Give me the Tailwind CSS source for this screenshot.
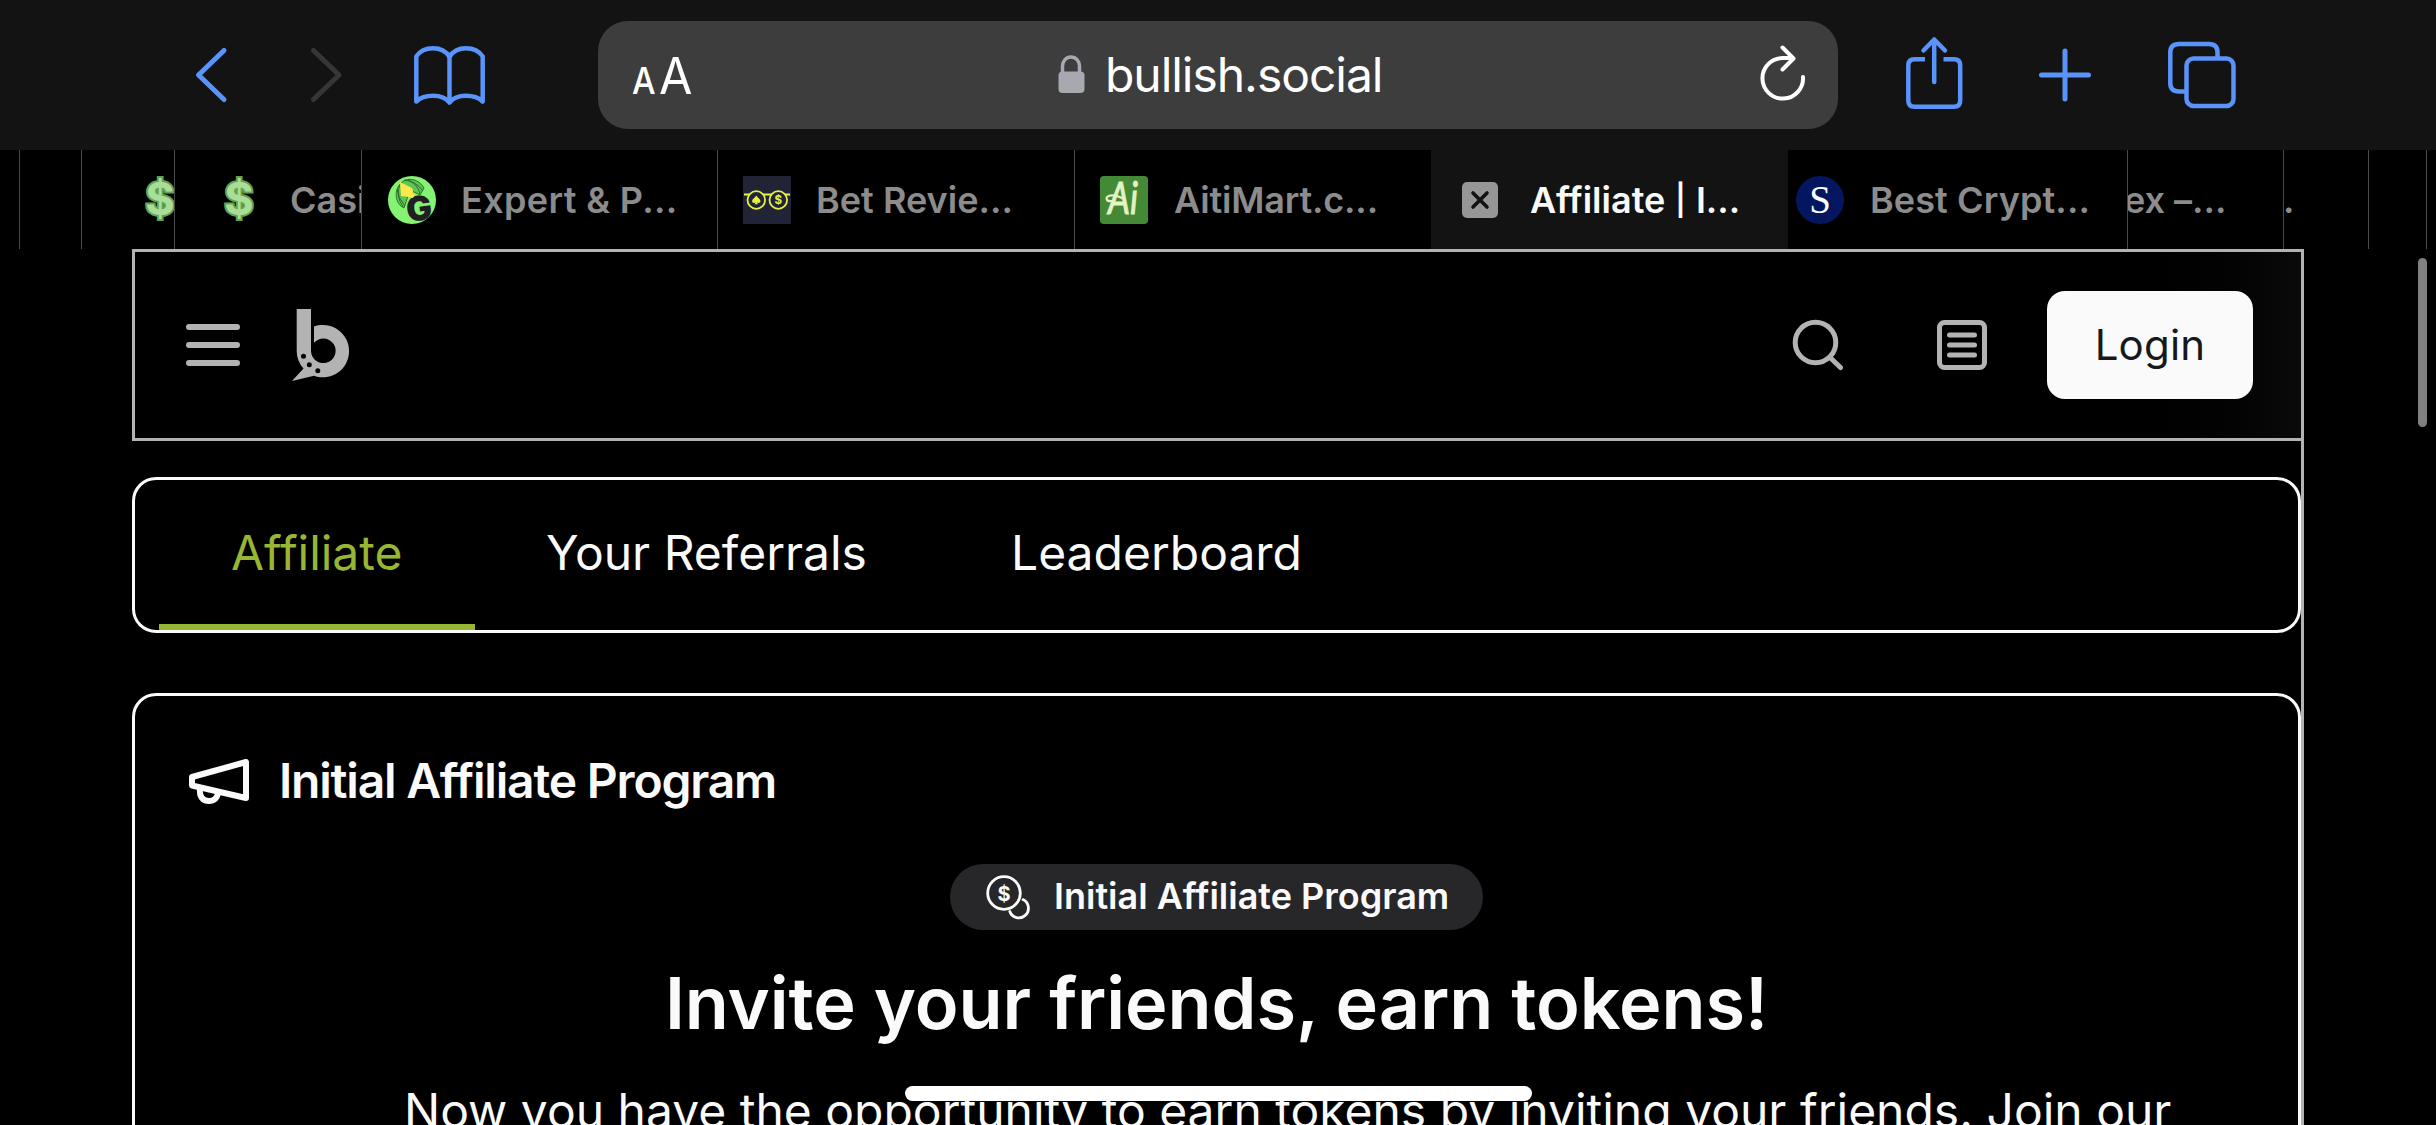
<!DOCTYPE html>
<html lang="en">
<head>
<meta charset="utf-8">
<title>Affiliate | Initial Affiliate Program</title>
<script src="https://cdn.jsdelivr.net/npm/@tailwindcss/browser@4"></script>
</head>
<body class="bg-black text-[#fafafa] font-['Inter',sans-serif] w-[2436px] h-[1125px] overflow-hidden relative">

<!-- Browser toolbar -->
<header class="h-[150px] bg-[#131313] flex items-center">
  <svg class="ml-[190px] w-[44px] h-[64px] shrink-0" viewBox="190.500 43 44 64" fill="none" stroke="#5a93fa" stroke-width="5" stroke-linecap="round" stroke-linejoin="round"><path d="M224.5 50.500 199 75l25.500 24.500"/></svg>
  <svg class="ml-[70px] w-[44px] h-[64px] shrink-0" viewBox="304 43 44 64" fill="none" stroke="#363636" stroke-width="5" stroke-linecap="round" stroke-linejoin="round"><path d="M313.500 50.500 339 75l-25.500 24.500"/></svg>
  <svg class="ml-[62px] w-[80px] h-[70px] shrink-0" viewBox="410 40 80 70" fill="none" stroke="#5a93fa" stroke-width="4.500" stroke-linecap="round" stroke-linejoin="round"><path d="M449.500 57C446 51 440 48.300 433 48.300S420 51 416.300 56.500V101.500C420 98 426 95.800 433 95.800S446 98 449.500 102.500C453 98 459 95.800 466 95.800S479 98 482.700 101.500V56.500C479 51 473 48.300 466 48.300S453 51 449.500 57V102"/></svg>
  <div class="ml-[108px] w-[1240px] h-[108px] rounded-[30px] bg-[#3d3d3d] flex items-center shrink-0 text-white">
    <div class="ml-[34px] w-[80px] flex items-baseline leading-none"><span class="text-[37px] w-[27px] font-medium origin-left scale-x-90">A</span><span class="text-[51px] origin-left scale-x-95">A</span></div>
    <svg class="ml-[345px] w-[28px] h-[42px] shrink-0" viewBox="1057 53 28 42"><path d="M1062.500 72V65a8.500 9 0 0 1 17 0V72" fill="none" stroke="#a8a8b0" stroke-width="3.500"/><rect x="1058.500" y="70.500" width="26" height="21.500" rx="4" fill="#a8a8b0"/></svg>
    <span class="ml-[20px] w-[290px] text-[48px] leading-none tracking-[-1.040px] whitespace-nowrap">bullish.social</span>
    <svg class="ml-[360px] w-[54px] h-[64px] shrink-0" viewBox="1755 43 54 64" fill="none" stroke="#fff" stroke-width="4" stroke-linecap="round" stroke-linejoin="round"><path d="M1803 77A20.300 20.300 0 1 1 1782.700 58H1793M1782.500 47.500 1793.500 58.500 1782.500 69.500"/></svg>
  </div>
  <svg class="ml-[62px] w-[68px] h-[84px] shrink-0" viewBox="1900 33 68 84" fill="none" stroke="#5a93fa" stroke-width="4.500" stroke-linecap="round" stroke-linejoin="round"><path stroke-linecap="butt" d="M1925 59.300H1914.500Q1908.300 59.300 1908.300 65.500V100.500Q1908.300 106.700 1914.500 106.700H1954Q1960.200 106.700 1960.200 100.500V65.500Q1960.200 59.300 1954 59.300H1943.500"/><path d="M1934.200 82V39.500M1923.500 50.500 1934.200 39.500 1945 50.500"/></svg>
  <svg class="ml-[65px] w-[64px] h-[64px] shrink-0" viewBox="2033 43 64 64" fill="none" stroke="#5a93fa" stroke-width="5" stroke-linecap="round"><path d="M2065 51V99M2041.500 75H2088.500"/></svg>
  <svg class="ml-[65px] w-[80px] h-[80px] shrink-0" viewBox="2162 35 80 80" fill="none" stroke="#5a93fa" stroke-width="4.500"><rect x="2186.500" y="58.500" width="47" height="47.500" rx="7"/><path d="M2186.500 91.500H2179Q2170.300 91.500 2170.300 83V52.500Q2170.300 44 2179 44H2209Q2217.500 44 2217.500 52.500V58.500"/></svg>
</header>

<!-- Tab strip -->
<nav class="h-[99px] flex text-[36px] font-semibold text-[#8c8c8c] leading-none whitespace-nowrap">
  <div class="w-[20px] shrink-0 border-r border-[#4a4a4a]"></div>
  <div class="w-[62px] shrink-0 border-r border-[#4a4a4a]"></div>
  <div class="w-[93px] shrink-0 border-r border-[#4a4a4a] flex items-center overflow-hidden">
    <svg class="ml-[60px] w-[36px] h-[52px] shrink-0" viewBox="0 0 36 52"><text x="18" y="41" text-anchor="middle" font-family="Inter" font-weight="700" font-size="45" fill="#aade98" stroke="#62a350" stroke-width="4" paint-order="stroke">$</text></svg>
  </div>
  <div class="w-[187px] shrink-0 border-r border-[#4a4a4a] flex items-center overflow-hidden">
    <svg class="ml-[46px] w-[36px] h-[52px] shrink-0" viewBox="0 0 36 52"><text x="18" y="41" text-anchor="middle" font-family="Inter" font-weight="700" font-size="45" fill="#aade98" stroke="#62a350" stroke-width="4" paint-order="stroke">$</text></svg>
    <span class="ml-[33px]">Casi</span>
  </div>
  <div class="w-[356px] shrink-0 border-r border-[#4a4a4a] flex items-center">
    <svg class="ml-[26px] w-[48px] h-[48px] shrink-0" viewBox="0 0 48 48"><defs><clipPath id="disc"><circle cx="24" cy="24" r="24"/></clipPath></defs><g clip-path="url(#disc)"><rect width="48" height="48" fill="#84f272"/><g fill="#5fc454" stroke="#1f5a20" stroke-width=".8"><path d="M14 6C20 1 31 3 36 12L32 19 22 14 16 32C7 28 5 14 14 6Z"/><path d="M16 4Q28 5 35 15M20 4Q30 8 32 18M12 9Q7 18 15 31M9 13Q10 22 17 30" fill="none"/></g><text x="18" y="44.500" font-family="Inter" font-weight="900" font-size="34" fill="#202020" transform="rotate(-8 31 31)">G</text><path d="M12 6 24 12Q26 16 24 18L27 18 25 22 21 21 13 20Z" fill="#fbe94e"/></g></svg>
    <span class="ml-[25px] tracking-[0.350px]">Expert &amp; P...</span>
  </div>
  <div class="w-[357px] shrink-0 border-r border-[#4a4a4a] flex items-center">
    <svg class="ml-[25px] w-[48px] h-[48px] shrink-0" viewBox="0 0 48 48"><rect width="48" height="48" fill="#202435"/><g fill="none" stroke="#e6f04a" stroke-width="1.800"><circle cx="13.300" cy="24" r="8.800"/><circle cx="35.300" cy="24" r="8.800"/><path d="M1 18.500H6.500M42 18.500H47M20 18.500H28.500"/></g><path d="M13.300 19.500C15 22 17.500 23 17.500 25.200 17.500 27 15.300 27.500 14 26.200L15 28.300H11.600L12.600 26.200C11.300 27.500 9.100 27 9.100 25.200 9.100 23 11.600 22 13.300 19.500Z" fill="#e6f04a"/><text x="35.300" y="28.300" text-anchor="middle" font-family="Inter" font-weight="700" font-size="11.500" fill="#e6f04a">$</text></svg>
    <span class="ml-[25px] tracking-[0.020px]">Bet Revie...</span>
  </div>
  <div class="w-[356px] shrink-0 flex items-center">
    <svg class="ml-[25px] w-[48px] h-[48px] shrink-0" viewBox="0 0 48 48"><rect width="48" height="48" rx="4" fill="#448a36"/><text x="0" y="0" font-family="Lato" font-style="italic" font-weight="400" font-size="37" fill="#e4f2c4" stroke="#e4f2c4" stroke-width=".8" transform="translate(8 38) scale(.94 1.180)">Ai</text><path d="M13 25Q5 26 7 21Q12 17 24 23" fill="none" stroke="#e4f2c4" stroke-width="2.200" stroke-linecap="round"/></svg>
    <span class="ml-[26px] tracking-[-0.180px]">AitiMart.c...</span>
  </div>
  <div class="w-[357px] shrink-0 bg-[#131313] flex items-center text-[#fafafa]">
    <svg class="ml-[31px] w-[36px] h-[36px] shrink-0" viewBox="0 0 36 36"><rect width="36" height="36" rx="5" fill="#969696"/><path d="M11 11 25 25M25 11 11 25" stroke="#131313" stroke-width="3.600" stroke-linecap="round"/></svg>
    <span class="ml-[32px]">Affiliate <span class="inline-block scale-y-85 font-medium">|</span> I...</span>
  </div>
  <div class="w-[340px] shrink-0 border-r border-[#4a4a4a] flex items-center">
    <svg class="ml-[8px] w-[48px] h-[48px] shrink-0" viewBox="0 0 48 48"><circle cx="24" cy="24" r="24" fill="#04165f"/><text x="24" y="37" text-anchor="middle" font-family="Liberation Serif" font-weight="400" font-size="39" fill="#fff">S</text></svg>
    <span class="ml-[26px] tracking-[0.100px]">Best Crypt...</span>
  </div>
  <div class="w-[156px] shrink-0 border-r border-[#4a4a4a] flex items-center overflow-hidden"><span class="-ml-[4px]">ex –...</span></div>
  <div class="w-[85px] shrink-0 border-r border-[#4a4a4a] flex items-center"><span class="-ml-[1px]">.</span></div>
  <div class="w-[58px] shrink-0 border-r border-[#4a4a4a]"></div>
</nav>

<!-- Page -->
<main class="ml-[132px] w-[2172px] h-[876px] overflow-hidden border-r-[3px] border-[#b3b3b3]">
  <div class="w-[2169px] h-[192px] border-y-[3px] border-l-[3px] border-[#b3b3b3] bg-linear-to-r from-black from-90% to-[#0a0a0a] flex items-center">
    <svg class="ml-[51px] w-[54px] h-[42px] shrink-0" viewBox="0 0 54 42" fill="#b3b3b3"><rect width="54" height="6" rx="3"/><rect y="18" width="54" height="6" rx="3"/><rect y="36" width="54" height="6" rx="3"/></svg>
    <svg class="ml-[50px] w-[62px] h-[76px] shrink-0" viewBox="290 307 62 76"><path fill="#b3b3b3" fill-rule="evenodd" d="M296.700 309H311V351A12.300 12.300 0 1 0 314 342.700V326.500A26.200 26.200 0 1 1 314 375.800L292 381 303.500 368.500Q296.700 361 296.700 351Z"/><g fill="#000"><circle cx="303.500" cy="356.300" r="2.500"/><circle cx="309.300" cy="364.800" r="2.500"/><circle cx="317.800" cy="370.700" r="2.500"/></g></svg>
    <div class="flex-1"></div>
    <svg class="w-[54px] h-[54px] shrink-0" viewBox="1790 318 54 54" fill="none" stroke="#b3b3b3" stroke-width="5" stroke-linecap="round"><circle cx="1815.500" cy="342.500" r="20.300"/><path d="M1830 357.500 1840.500 367.500"/></svg>
    <svg class="ml-[93px] w-[50px] h-[50px] shrink-0" viewBox="0 0 50 50" fill="none" stroke="#b3b3b3" stroke-width="5"><rect x="2.500" y="2.500" width="45" height="45" rx="5"/><path d="M12.500 15H37.500M12.500 25H37.500M12.500 35H37.500" stroke-linecap="round"/></svg>
    <button class="ml-[60px] mr-[48px] w-[206px] h-[108px] pb-[2px] rounded-[18px] bg-[#fafafa] text-[#18181b] text-[42px] tracking-[0.200px] shrink-0">Login</button>
  </div>

  <div class="mt-[36px] w-[2169px] h-[156px] rounded-[24px] border-[3px] border-[#fafafa] flex pl-[24px] text-[48px]">
    <div class="w-[316px] pl-[72px] pt-[2px] border-b-[6px] border-[#97b633] text-[#97b633] flex items-center tracking-[-0.050px]">Affiliate</div>
    <div class="w-[465px] pl-[71px] pt-[2px] border-b-[6px] border-transparent flex items-center">Your Referrals</div>
    <div class="w-[435px] pl-[71px] pt-[2px] border-b-[6px] border-transparent flex items-center">Leaderboard</div>
  </div>

  <section class="mt-[60px] w-[2169px] h-[600px] rounded-[24px] border-[3px] border-[#fafafa] flex flex-col">
    <div class="mt-[57px] ml-[48px] h-[56px] flex items-center">
      <svg class="ml-[4px] w-[64px] h-[56px] shrink-0" viewBox="187 753 64 56" fill="none" stroke="#fafafa" stroke-width="6" stroke-linejoin="round" stroke-linecap="round"><path d="M192 777 246 762V798L192 785.500Z"/><path d="M200 788C199 797 203 801 209 801 214 801 217.500 798 218 792.500"/></svg>
      <h2 class="ml-[28px] text-[48px] font-semibold tracking-tight">Initial Affiliate Program</h2>
    </div>
    <div class="mt-[55px] self-center w-[533px] h-[66px] rounded-full bg-[#27272a] flex items-center">
      <svg class="ml-[33px] w-[50px] h-[50px] shrink-0" viewBox="983 872 50 50" fill="none" stroke="#fafafa" stroke-width="2.800" stroke-linecap="round"><circle cx="1004" cy="893" r="16.300"/><path d="M1023 899.600A9.600 9.600 0 1 1 1009.800 911.500"/><text x="1004" y="900.500" text-anchor="middle" font-family="Inter" font-weight="700" font-size="20" fill="#fafafa" stroke="none">$</text></svg>
      <span class="ml-[21px] pb-[2px] text-[36px] font-semibold">Initial Affiliate Program</span>
    </div>
    <h1 class="mt-[37px] self-center text-[72px] leading-[72px] font-semibold tracking-[-0.060px] whitespace-nowrap">Invite your friends, earn tokens!</h1>
    <p class="mt-[33px] ml-[269px] text-[48px] leading-[78px] whitespace-nowrap">Now you have the opportunity to earn tokens by inviting your friends. Join our</p>
  </section>
</main>

<!-- Scrollbar and home indicator -->
<div class="absolute left-[2418px] top-[258px] w-[9px] h-[169px] rounded-full bg-[#808080]"></div>
<div class="absolute left-[905px] top-[1086px] w-[627px] h-[15px] rounded-full bg-white"></div>
</body>
</html>
